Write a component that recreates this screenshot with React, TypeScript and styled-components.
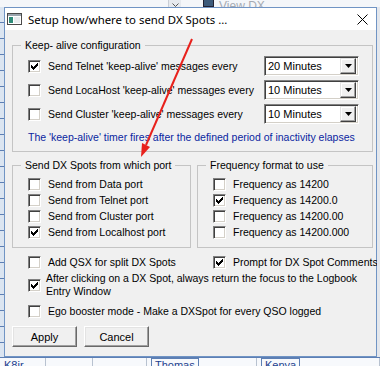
import React from "react";
import styled, { createGlobalStyle } from "styled-components";

const GlobalStyle = createGlobalStyle`
  html, body {
    margin: 0;
    padding: 0;
    background: #eef2f7;
  }
  body {
    font-family: "Liberation Sans", Arial, sans-serif;
    font-size: 10.5px;
    color: #000;
  }
`

const Desktop = styled.div`
  position: relative;
  width: 380px;
  height: 366px;
  display: flex;
  flex-direction: column;
  overflow: hidden;
  background: #eef2f7;
`

const TopStrip = styled.div`
  height: 7px;
  display: flex;
  align-items: flex-end;
  overflow: hidden;
  background: #f4f6f9;
`

const ScrollChevron = styled.div`
  margin-left: 168px;
  width: 12px;
  height: 7px;
  display: flex;
  align-items: flex-end;
  justify-content: center;
  background: #e6e9ee;
  border-left: 1px solid #c9ced6;
`

const TopIcon = styled.div`
  margin-left: 22px;
  width: 9px;
  height: 6px;
  background: #3c5a7a;
  border: 1px solid #223;
  border-top: none;
`

const TopLabel = styled.span`
  margin-left: 5px;
  line-height: 12px;
  font-size: 12px;
  color: #a6abb3;
  margin-bottom: -5px;
`

const MiddleRow = styled.div`
  display: flex;
`

const LeftStrip = styled.div`
  width: 4px;
  background:
    repeating-linear-gradient(to bottom, #dbe5f1 0 15px, #5d7fb4 15px 16px);
`

const RightStrip = styled.div`
  flex: 1;
  background: #e4e7ec;
`

const Window = styled.div`
  width: 373px;
  height: 350px;
  box-sizing: border-box;
  border: 1px solid #7094c4;
  display: flex;
  flex-direction: column;
  background: #f0f0f0;
`

const TitleBar = styled.div`
  height: 22px;
  flex: none;
  display: flex;
  align-items: center;
  padding: 0 8px 0 2px;
  background: #fff;
  font-family: "Noto Sans", "Open Sans", sans-serif;
  font-size: 11.4px;
  color: #000;
`

const TitleText = styled.span`
  margin-left: 5px;
  flex: 1;
  white-space: nowrap;
`

const Body = styled.div`
  flex: 1;
  display: flex;
  flex-direction: column;
  padding: 15px 3px 8px 7px;
`

const GroupBox = styled.div<{ $width: number; $padTop: number }>`
  position: relative;
  width: ${(p) => p.$width}px;
  box-sizing: border-box;
  border: 1px solid #c4c4c4;
  padding: ${(p) => p.$padTop}px 13px 7px 15px;
`

const GroupTitle = styled.span`
  position: absolute;
  top: -7px;
  left: 8px;
  padding: 0 4px;
  line-height: 13px;
  background: #f0f0f0;
  white-space: nowrap;
`

const KeepAliveRow = styled.div`
  height: 24px;
  display: grid;
  grid-template-columns: 1fr 95px;
  align-items: center;
`

const Note = styled.div`
  margin-top: 4px;
  line-height: 14px;
  color: #0a1fa0;
  white-space: nowrap;
`

const TwinGrid = styled.div<{ $gap: number }>`
  display: grid;
  grid-template-columns: 179px 176px;
  column-gap: 6px;
  margin-top: ${(p) => p.$gap}px;
`

const CheckRow = styled.label<{ $height?: number }>`
  display: flex;
  align-items: center;
  gap: 7px;
  height: ${(p) => p.$height ?? 16}px;
  white-space: nowrap;
`

const LooseRow = styled.div<{ $gap: number }>`
  margin-top: ${(p) => p.$gap}px;
  padding-left: 16px;
`

const TwoLineLabel = styled.label`
  display: flex;
  align-items: center;
  gap: 5px;
  line-height: 13px;
`

const Box = styled.span`
  flex: none;
  width: 13px;
  height: 13px;
  box-sizing: border-box;
  border: 1px solid;
  border-color: #808080 #ffffff #ffffff #808080;
  box-shadow: inset 1px 1px 0 #404040, inset -1px -1px 0 #d4d0c8;
  background: #fff;
  display: flex;
  align-items: center;
  justify-content: center;
`

const Combo = styled.div`
  width: 95px;
  height: 20px;
  box-sizing: border-box;
  border: 1px solid;
  border-color: #808080 #ffffff #ffffff #808080;
  box-shadow: inset 1px 1px 0 #404040, inset -1px -1px 0 #d4d0c8;
  background: #fff;
  display: flex;
  align-items: center;
  padding: 1px 2px 1px 2px;
`

const ComboText = styled.span`
  flex: 1;
  padding-left: 1px;
  font-size: 11px;
`

const ComboButton = styled.span`
  width: 16px;
  height: 16px;
  box-sizing: border-box;
  background: #f0f0f0;
  border: 1px solid;
  border-color: #e3e3e3 #404040 #404040 #e3e3e3;
  box-shadow: inset -1px -1px 0 #a0a0a0, inset 1px 1px 0 #fff;
  display: flex;
  align-items: center;
  justify-content: center;
`

const ButtonRow = styled.div`
  display: flex;
  gap: 7px;
  margin-top: 7px;
`

const PushButton = styled.button`
  width: 65px;
  height: 21px;
  padding: 0;
  font-family: "Liberation Sans", Arial, sans-serif;
  font-size: 11px;
  color: #000;
  background: #f0f0f0;
  border: 1px solid;
  border-color: #fff #696969 #696969 #fff;
  box-shadow: inset -1px -1px 0 #a0a0a0, inset 1px 1px 0 #e3e3e3;
`

const BottomStrip = styled.div`
  flex: 1;
  display: flex;
  background: #f7f9fc;
  border-top: 1px solid #5d7fb4;
  overflow: hidden;
`

const Cell = styled.div<{ $width: number }>`
  width: ${(p) => p.$width}px;
  flex: none;
  box-sizing: border-box;
  border-right: 1px solid #b8c2d0;
  padding: 1px 0 0 4px;
  color: #1c3f8f;
  font-size: 11px;
  line-height: 12px;
`

const CellTag = styled.span`
  padding: 0 3px;
  border: 1px solid #5d7fb4;
  border-bottom: none;
`

const ArrowLayer = styled.svg`
  position: absolute;
  left: 0;
  top: 0;
  pointer-events: none;
`

const TICK = [
  [6, 0, 1], [5, 1, 2], [0, 2, 1], [4, 2, 3], [0, 3, 2],
  [3, 3, 3], [0, 4, 5], [1, 5, 3], [2, 6, 1],
]

const Check = ({ on }: { on?: boolean }) => (
  <Box>
    {on && (
      <svg width="7" height="7" shapeRendering="crispEdges">
        {TICK.map(([x, y, w]) => (
          <rect key={`${x}-${y}`} x={x} y={y} width={w} height={1} fill="#000" />
        ))}
      </svg>
    )}
  </Box>
)

const Dropdown = ({ value }: { value: string }) => (
  <Combo>
    <ComboText>{value}</ComboText>
    <ComboButton>
      <svg width="7" height="4">
        <polygon points="0,0 7,0 3.5,4" fill="#000" />
      </svg>
    </ComboButton>
  </Combo>
)

const AppIcon = () => (
  <svg width="16" height="16" viewBox="0 0 16 16">
    <rect x="0.5" y="2.5" width="14" height="11" fill="#fff" stroke="#4a4a4a" />
    <rect x="1" y="3" width="13" height="2" fill="#9aa4ad" />
    <rect x="2" y="6" width="4" height="6" fill="#2e8b78" />
    <rect x="7" y="6" width="6" height="6" fill="#e8ecef" />
  </svg>
)

const CloseIcon = () => (
  <svg width="11" height="11" viewBox="0 0 11 11">
    <path d="M0.5 0.5 L10.5 10.5 M10.5 0.5 L0.5 10.5" stroke="#000" strokeWidth="1" />
  </svg>
)

const keepAlive = [
  { label: "Send Telnet 'keep-alive' messages every", value: "20 Minutes", on: true },
  { label: "Send LocaHost 'keep-alive' messages every", value: "10 Minutes" },
  { label: "Send Cluster 'keep-alive' messages every", value: "10 Minutes" },
]

const ports = [
  { label: "Send from Data port" },
  { label: "Send from Telnet port" },
  { label: "Send from Cluster port" },
  { label: "Send from Localhost port", on: true },
]

const formats = [
  { label: "Frequency as 14200" },
  { label: "Frequency as 14200.0", on: true },
  { label: "Frequency as 14200.00" },
  { label: "Frequency as 14200.000" },
]

export default function App() {
  return (
    <Desktop>
      <GlobalStyle />
      <TopStrip>
        <ScrollChevron>
          <svg width="7" height="4">
            <path d="M0.5 0.5 L3.5 3.5 L6.5 0.5" stroke="#555" fill="none" />
          </svg>
        </ScrollChevron>
        <TopIcon />
        <TopLabel>View DX</TopLabel>
      </TopStrip>
      <MiddleRow>
        <LeftStrip />
        <Window>
          <TitleBar>
            <AppIcon />
            <TitleText>Setup how/where to send DX Spots ...</TitleText>
            <CloseIcon />
          </TitleBar>
          <Body>
            <GroupBox $width={361} $padTop={8}>
              <GroupTitle>Keep- alive configuration</GroupTitle>
              {keepAlive.map((r) => (
                <KeepAliveRow key={r.label}>
                  <CheckRow $height={24}>
                    <Check on={r.on} />
                    {r.label}
                  </CheckRow>
                  <Dropdown value={r.value} />
                </KeepAliveRow>
              ))}
              <Note>The 'keep-alive' timer fires after the defined period of inactivity elapses</Note>
            </GroupBox>

            <TwinGrid $gap={13}>
              <GroupBox $width={179} $padTop={10}>
                <GroupTitle>Send DX Spots from which port</GroupTitle>
                {ports.map((r) => (
                  <CheckRow key={r.label}>
                    <Check on={r.on} />
                    {r.label}
                  </CheckRow>
                ))}
              </GroupBox>
              <GroupBox $width={176} $padTop={10}>
                <GroupTitle>Frequency format to use</GroupTitle>
                {formats.map((r) => (
                  <CheckRow key={r.label}>
                    <Check on={r.on} />
                    {r.label}
                  </CheckRow>
                ))}
              </GroupBox>
            </TwinGrid>

            <TwinGrid $gap={6}>
              <LooseRow $gap={0}>
                <CheckRow>
                  <Check />
                  Add QSX for split DX Spots
                </CheckRow>
              </LooseRow>
              <LooseRow $gap={0}>
                <CheckRow>
                  <Check on />
                  Prompt for DX Spot Comments
                </CheckRow>
              </LooseRow>
            </TwinGrid>

            <LooseRow $gap={2}>
              <TwoLineLabel>
                <Check on />
                <span>
                  After clicking on a DX Spot, always return the focus to the Logbook
                  <br />
                  Entry Window
                </span>
              </TwoLineLabel>
            </LooseRow>

            <LooseRow $gap={5}>
              <CheckRow>
                <Check />
                Ego booster mode - Make a DXSpot for every QSO logged
              </CheckRow>
            </LooseRow>

            <ButtonRow>
              <PushButton>Apply</PushButton>
              <PushButton>Cancel</PushButton>
            </ButtonRow>
          </Body>
        </Window>
        <RightStrip />
      </MiddleRow>
      <BottomStrip>
        <Cell $width={46}>K8ir</Cell>
        <Cell $width={47} />
        <Cell $width={54} />
        <Cell $width={110}>
          <CellTag>Thomas</CellTag>
        </Cell>
        <Cell $width={123}>
          <CellTag>Kenya</CellTag>
        </Cell>
      </BottomStrip>
      <ArrowLayer width="380" height="366" viewBox="0 0 380 366">
        <line x1="192" y1="39" x2="146" y2="145" stroke="#e8211c" strokeWidth="2" />
        <polygon points="141,157 150,147 142,143" fill="#e8211c" />
      </ArrowLayer>
    </Desktop>
  )
}
